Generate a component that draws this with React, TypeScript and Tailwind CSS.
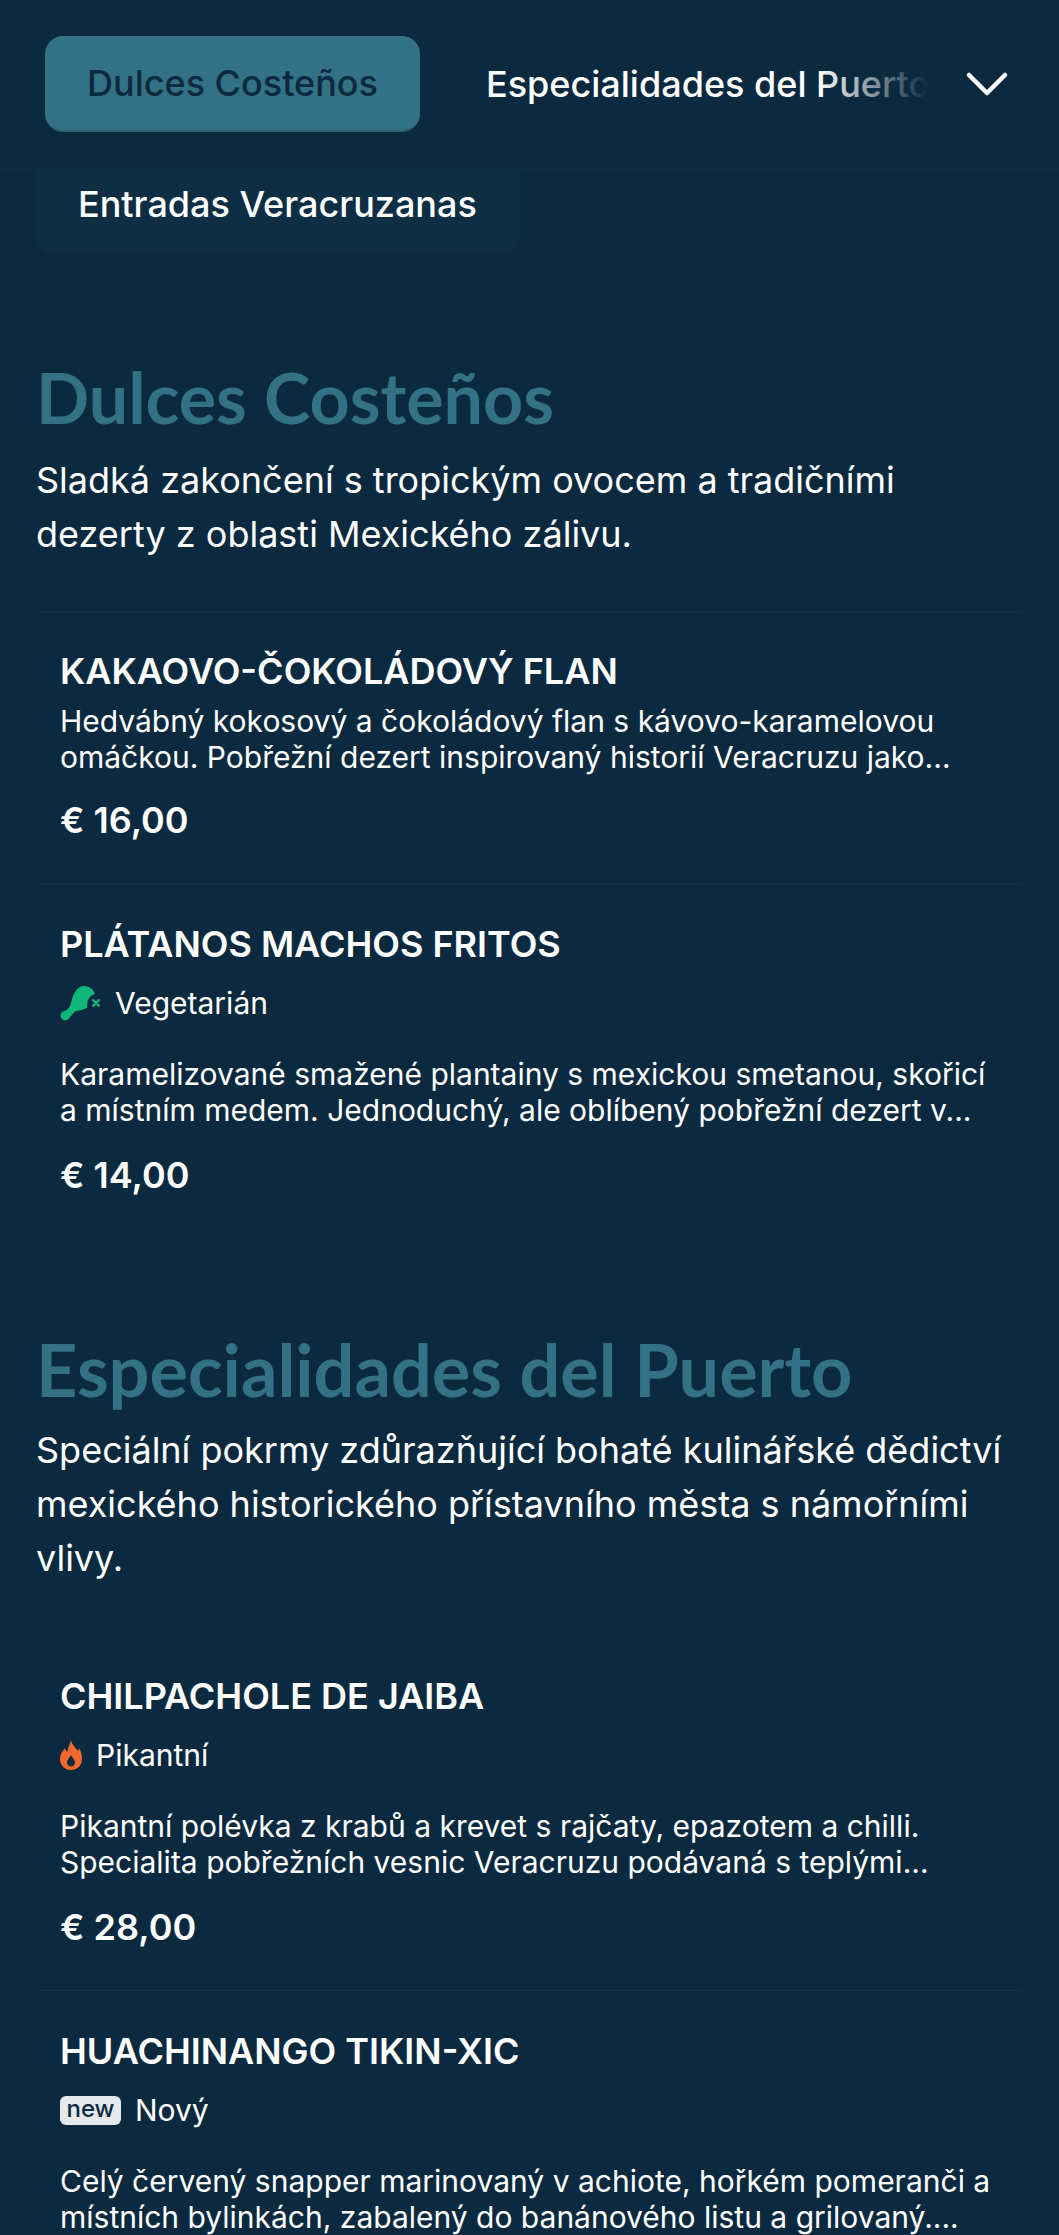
import { ChevronDown } from "lucide-react";

type Tag = "veg" | "spicy" | "new";

type Item = {
  name: string;
  tag?: Tag;
  desc: string[];
  price?: string;
};

const dulces: Item[] = [
  {
    name: "KAKAOVO-ČOKOLÁDOVÝ FLAN",
    desc: [
      "Hedvábný kokosový a čokoládový flan s kávovo-karamelovou",
      "omáčkou. Pobřežní dezert inspirovaný historií Veracruzu jako...",
    ],
    price: "€ 16,00",
  },
  {
    name: "PLÁTANOS MACHOS FRITOS",
    tag: "veg",
    desc: [
      "Karamelizované smažené plantainy s mexickou smetanou, skořicí",
      "a místním medem. Jednoduchý, ale oblíbený pobřežní dezert v...",
    ],
    price: "€ 14,00",
  },
];

const puerto: Item[] = [
  {
    name: "CHILPACHOLE DE JAIBA",
    tag: "spicy",
    desc: [
      "Pikantní polévka z krabů a krevet s rajčaty, epazotem a chilli.",
      "Specialita pobřežních vesnic Veracruzu podávaná s teplými...",
    ],
    price: "€ 28,00",
  },
  {
    name: "HUACHINANGO TIKIN-XIC",
    tag: "new",
    desc: [
      "Celý červený snapper marinovaný v achiote, hořkém pomeranči a",
      "místních bylinkách, zabalený do banánového listu a grilovaný....",
    ],
  },
];

function VegIcon() {
  return (
    <svg viewBox="0 0 41 37" className="h-[37px] w-[41px]">
      <path
        fill="#10b67a"
        d="M23 1C28 1 33 3 35 9C32 10 29 12 28 15C27 18 27.5 21 27 23C22 25 18 26 15 26.5C13 28 12 30 10 32C9 35 5 36 3 35C1 34 0 30 1 28C3 26 5 26 7 25C10 22 11 18 12 14C14 8 17 2 23 1Z"
      />
      <path d="M32.5 14.5l7 7M39.5 14.5l-7 7" stroke="#10b67a" strokeWidth="2.4" fill="none" />
    </svg>
  );
}

function FlameIcon() {
  return (
    <svg viewBox="0 0 22 30" className="h-[30px] w-[22px]">
      <path
        fill="#f3682c"
        fillRule="evenodd"
        d="M11 0C12 5 15 7 18 11C18.5 10 19 9 19 8C21 11 22 15 22 19C22 25.5 17 30 11 30C5 30 0 25.5 0 19C0 14 3 11 5 8C5.5 10 6 11 7 12C8 8 10 4 11 0ZM11 26.5C8.5 26.5 7 24.5 7 22.5C7 19.5 9.5 18 11 15C12.5 18 15 19.5 15 22.5C15 24.5 13.5 26.5 11 26.5Z"
      />
    </svg>
  );
}

function ItemTag({ tag }: { tag: Tag }) {
  if (tag === "veg") {
    return (
      <div className="mt-[20px] flex h-[36px] items-center gap-[14px] text-[30px] text-white">
        <VegIcon />
        <span>Vegetarián</span>
      </div>
    );
  }
  if (tag === "spicy") {
    return (
      <div className="mt-[20px] flex h-[36px] items-center gap-[14px] text-[30px] text-white">
        <FlameIcon />
        <span>Pikantní</span>
      </div>
    );
  }
  return (
    <div className="mt-[20px] flex h-[36px] items-center gap-[14px] text-[30px] text-white">
      <span className="flex h-[29px] w-[61px] items-center justify-center rounded-[6px] bg-[#e5e9ec] pb-[3px] text-[24px] font-medium text-[#0c2a3f]">
        new
      </span>
      <span>Nový</span>
    </div>
  );
}

function MenuItem({ item, first }: { item: Item; first?: boolean }) {
  return (
    <div className={first ? "px-[24px] pb-[41px] pt-[38px]" : "border-t border-[#12324a] px-[24px] pb-[41px] pt-[39px]"}>
      <h3 className="text-[36px] leading-[42px] font-semibold text-white">{item.name}</h3>
      {item.tag && <ItemTag tag={item.tag} />}
      <p className={item.tag ? "mt-[35px] text-[30px] leading-[36px] text-white" : "mt-[11px] text-[30px] leading-[36px] text-white"}>
        {item.desc.map((line) => (
          <span key={line} className="block whitespace-nowrap">
            {line}
          </span>
        ))}
      </p>
      {item.price && (
        <div className={item.tag ? "mt-[25px] text-[36px] leading-[44px] font-semibold text-white" : "mt-[23px] text-[36px] leading-[44px] font-semibold text-white"}>
          {item.price}
        </div>
      )}
    </div>
  );
}

export default function App() {
  return (
    <div className="h-[2235px] overflow-hidden bg-[#0c2a3f] font-['Inter',sans-serif]">
      <div className="flex h-[170px] items-center border-b border-[#11314a] pb-[2px] pl-[45px] pr-[36px]">
        <div className="flex h-[96px] w-[375px] items-center justify-center rounded-[18px] border-b-2 border-[#2a6072] bg-[#337184] text-[36px] font-medium text-[#0c2a3f]">
          Dulces Costeños
        </div>
        <div className="relative ml-[66px] w-[442px] overflow-hidden whitespace-nowrap text-[36px] font-medium text-white">
          Especialidades del Puerto
          <div className="absolute inset-y-0 right-0 w-[110px] bg-gradient-to-r from-transparent to-[#0c2a3f]" />
        </div>
        <ChevronDown className="ml-auto h-[72px] w-[72px] text-white" strokeWidth={1.5} />
      </div>

      <div className="ml-[36px] flex h-[83px] w-[484px] items-center rounded-b-[18px] bg-[#0e2e44] pb-[16px] pl-[42px] text-[36px] font-medium text-white">
        Entradas Veracruzanas
      </div>

      <div className="px-[36px]">
        <h2 className="mt-[104px] font-['Lato',sans-serif] text-[70px] leading-[80px] font-bold text-[#337184]">
          Dulces Costeños
        </h2>
        <p className="mt-[16px] text-[36px] leading-[54px] text-white">
          Sladká zakončení s tropickým ovocem a tradičními
          <br />
          dezerty z oblasti Mexického zálivu.
        </p>
        <div className="mt-[50px] border-t border-[#12324a]">
          {dulces.map((item, i) => (
            <MenuItem key={item.name} item={item} first={i === 0} />
          ))}
        </div>

        <h2 className="mt-[91px] font-['Lato',sans-serif] text-[72px] leading-[80px] font-bold text-[#337184]">
          Especialidades del Puerto
        </h2>
        <p className="mt-[14px] text-[36px] leading-[54px] text-white">
          Speciální pokrmy zdůrazňující bohaté kulinářské dědictví
          <br />
          mexického historického přístavního města s námořními
          <br />
          vlivy.
        </p>
        <div className="mt-[52px]">
          {puerto.map((item, i) => (
            <MenuItem key={item.name} item={item} first={i === 0} />
          ))}
        </div>
      </div>
    </div>
  );
}
